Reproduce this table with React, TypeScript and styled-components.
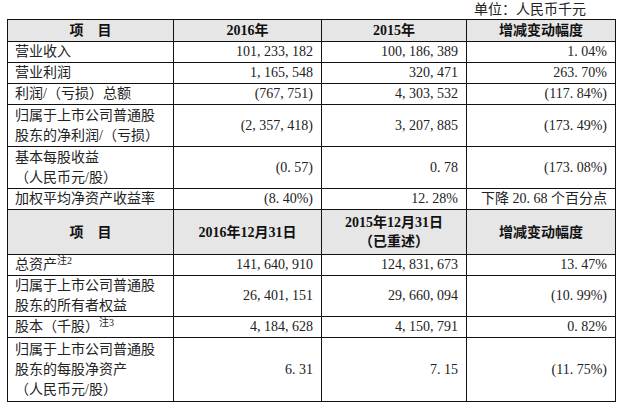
import React from "react";
import styled, { createGlobalStyle } from "styled-components";

const Global = createGlobalStyle`
  html, body { margin: 0; padding: 0; background: #fff; }
  body { font-family: "Liberation Serif", "Noto Sans CJK SC", serif; color: #222; }
`;

const Page = styled.div`
  width: 617px;
  padding: 0 0 0 7px;
  box-sizing: border-box;
`;

const Unit = styled.div`
  width: 608px;
  height: 19px;
  line-height: 19px;
  font-size: 14px;
  text-align: right;
  padding-right: 29px;
  box-sizing: border-box;
  color: #222;
`;

const Table = styled.table`
  border-collapse: collapse;
  table-layout: fixed;
  width: 609px;
  font-size: 14px;
`;

const Row = styled.tr<{ $h: number }>`
  height: ${(p) => p.$h}px;
`;

const Head = styled.th`
  background: #e6e6e6;
  border: 1px solid #111;
  font-weight: 700;
  text-align: center;
  padding: 0 6px;
  line-height: 19px;
  color: #111;
`;

const Label = styled.td`
  border: 1px solid #111;
  padding: 0 7px;
  line-height: 20px;
  text-align: left;
  vertical-align: middle;
`;

const Num = styled.td`
  border: 1px solid #111;
  padding: 0 8px;
  line-height: 20px;
  text-align: right;
  vertical-align: middle;
  white-space: nowrap;
`;

const Note = styled.sup`
  font-size: 10px;
  line-height: 0;
  vertical-align: 5px;
`;

type R = { h: number; label: React.ReactNode; a: string; b: string; c: string };

const top: R[] = [
  { h: 20, label: "营业收入", a: "101, 233, 182", b: "100, 186, 389", c: "1. 04%" },
  { h: 21, label: "营业利润", a: "1, 165, 548", b: "320, 471", c: "263. 70%" },
  { h: 21, label: "利润/（亏损）总额", a: "(767, 751)", b: "4, 303, 532", c: "(117. 84%)" },
  { h: 42, label: <>归属于上市公司普通股<br />股东的净利润/（亏损）</>, a: "(2, 357, 418)", b: "3, 207, 885", c: "(173. 49%)" },
  { h: 42, label: <>基本每股收益<br />（人民币元/股）</>, a: "(0. 57)", b: "0. 78", c: "(173. 08%)" },
  { h: 20, label: "加权平均净资产收益率", a: "(8. 40%)", b: "12. 28%", c: "下降 20. 68 个百分点" },
];

const bottom: R[] = [
  { h: 21, label: <>总资产<Note>注2</Note></>, a: "141, 640, 910", b: "124, 831, 673", c: "13. 47%" },
  { h: 41, label: <>归属于上市公司普通股<br />股东的所有者权益</>, a: "26, 401, 151", b: "29, 660, 094", c: "(10. 99%)" },
  { h: 21, label: <>股本（千股）<Note>注3</Note></>, a: "4, 184, 628", b: "4, 150, 791", c: "0. 82%" },
  { h: 64, label: <>归属于上市公司普通股<br />股东的每股净资产<br />（人民币元/股）</>, a: "6. 31", b: "7. 15", c: "(11. 75%)" },
];

const Body = ({ rows }: { rows: R[] }) => (
  <>
    {rows.map((r, i) => (
      <Row key={i} $h={r.h}>
        <Label>{r.label}</Label>
        <Num>{r.a}</Num>
        <Num>{r.b}</Num>
        <Num>{r.c}</Num>
      </Row>
    ))}
  </>
);

export default function App() {
  return (
    <Page>
      <Global />
      <Unit>单位：人民币千元</Unit>
      <Table>
        <colgroup>
          <col style={{ width: 166 }} />
          <col style={{ width: 148 }} />
          <col style={{ width: 145 }} />
          <col style={{ width: 149 }} />
        </colgroup>
        <tbody>
          <Row $h={22}>
            <Head>项　目</Head>
            <Head>2016年</Head>
            <Head>2015年</Head>
            <Head>增减变动幅度</Head>
          </Row>
          <Body rows={top} />
          <Row $h={45}>
            <Head>项　目</Head>
            <Head>2016年12月31日</Head>
            <Head>2015年12月31日<br />（已重述）</Head>
            <Head>增减变动幅度</Head>
          </Row>
          <Body rows={bottom} />
        </tbody>
      </Table>
    </Page>
  );
}
